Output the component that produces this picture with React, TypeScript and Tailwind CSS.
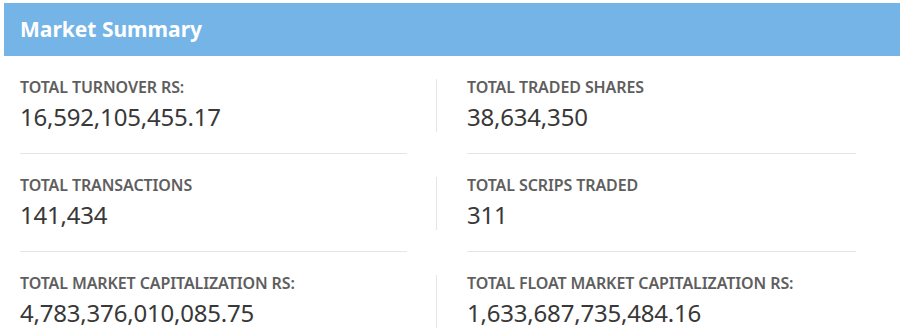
const stats: [string, string][][] = [
  [
    ['TOTAL TURNOVER RS:', '16,592,105,455.17'],
    ['TOTAL TRADED SHARES', '38,634,350'],
  ],
  [
    ['TOTAL TRANSACTIONS', '141,434'],
    ['TOTAL SCRIPS TRADED', '311'],
  ],
  [
    ['TOTAL MARKET CAPITALIZATION RS:', '4,783,376,010,085.75'],
    ['TOTAL FLOAT MARKET CAPITALIZATION RS:', '1,633,687,735,484.16'],
  ],
];

function Stat({ label, value }: { label: string; value: string }) {
  return (
    <div className="h-[53px] flex flex-col">
      <p className="text-[16px] leading-[16px] mb-[6px] font-semibold text-[#5e5e5e] tracking-[-0.1px]">{label}</p>
      <p className="text-[24px] leading-[31px] text-[#383838] tracking-[-0.2px]">{value}</p>
    </div>
  );
}

export default function App() {
  return (
    <div className="w-[902px] h-[331px] bg-white overflow-hidden pt-[3px] pl-[4px]" style={{ fontFamily: '"Noto Sans", "Open Sans", sans-serif' }}>
      <div className="w-[896px]">
        {/* Header */}
        <div className="h-[53px] bg-[#74b4e6] px-4 flex items-center">
          <h2 className="text-[21px] font-bold text-white">Market Summary</h2>
        </div>

        {/* Stats */}
        <div className="pt-[23px]">
          {stats.map((row, i) => (
            <div key={i} className="flex">
              <div className="pl-4 w-[403px]">
                <Stat label={row[0][0]} value={row[0][1]} />
                <div className={`mt-[21px] h-px bg-[#e5e5e5] ${i < 2 ? 'mb-[23px]' : ''}`} />
              </div>
              <div className="ml-[29px] flex">
                <div className="w-px h-[53px] bg-[#e5e5e5]" />
                <div className="pl-[30px] w-[419px]">
                  <Stat label={row[1][0]} value={row[1][1]} />
                  <div className={`mt-[21px] h-px bg-[#e5e5e5] ${i < 2 ? 'mb-[23px]' : ''}`} />
                </div>
              </div>
            </div>
          ))}
        </div>
      </div>
    </div>
  );
}
